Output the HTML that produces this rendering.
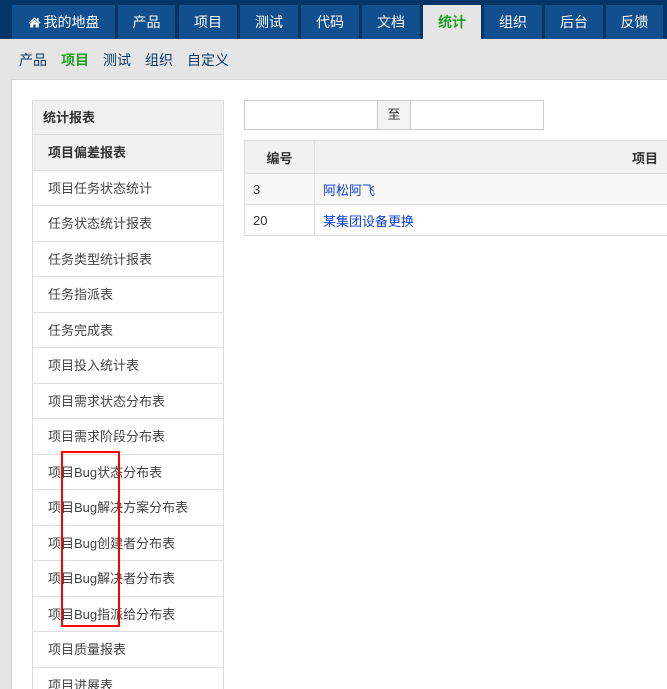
<!DOCTYPE html>
<html><head><meta charset="utf-8"><style>
*{margin:0;padding:0;box-sizing:border-box}
html{width:667px;height:689px;overflow:hidden}
body{width:667px;height:689px;overflow:hidden;background:#e5e5e5;font-family:"Liberation Sans","Noto Sans CJK SC",sans-serif;font-size:13px;color:#333;position:relative}
.top{position:absolute;left:0;top:0;width:667px;height:39px;background:#033567}
.tab{position:absolute;top:5px;height:34px;background:#114f8e;color:#fff;font-size:14px;line-height:34px;text-align:center}
.tab.on{background:#e5e5e5;color:#229f24;font-weight:bold}
.sub{position:absolute;top:50px;font-size:14px;color:#0b3a6a}
.panel{position:absolute;left:11px;top:79px;width:670px;height:620px;background:#fff;border:1px solid #d5d5d5}
.side{position:absolute;left:32px;top:100px;width:192px;height:589px;overflow:hidden;border:1px solid #ddd;border-bottom:none}
.side div{height:35.5px;line-height:35px;border-bottom:1px solid #ddd;padding-left:15px;color:#444}
.side .h{height:34px;line-height:34px;background:#f1f1f1;font-weight:bold;padding-left:10px;color:#333}
.side .a{background:#f1f1f1;font-weight:bold;color:#333}
.box{position:absolute;border:1px solid #ccc;background:#fff}
table{position:absolute;left:244px;top:140px;border-collapse:collapse;width:430px}
td,th{border:1px solid #ddd;height:31px;padding:0 8px;text-align:left;font-weight:normal}
th{height:33px;background:#f1f1f1;font-weight:bold;text-align:center}
a{color:#0d3fd7;text-decoration:none}
</style></head><body>
<div class="top"></div>
<div class="tab" style="left:12px;width:103px"><svg width="13" height="11" viewBox="0 0 13 11" style="vertical-align:-1px;margin-right:3px"><path d="M6.5 0.5L0.5 5.8 1.3 6.6 6.5 2 11.7 6.6 12.5 5.8 10.5 4V1H9V2.7Z" fill="#fff"/><path d="M2.3 6.3L6.5 2.7 10.7 6.3V10.5H7.7V7.5H5.3V10.5H2.3Z" fill="#fff"/></svg>我的地盘</div>
<div class="tab" style="left:118px;width:57px">产品</div>
<div class="tab" style="left:179px;width:58px">项目</div>
<div class="tab" style="left:240px;width:58px">测试</div>
<div class="tab" style="left:301px;width:58px">代码</div>
<div class="tab" style="left:362px;width:58px">文档</div>
<div class="tab on" style="left:423px;width:58px">统计</div>
<div class="tab" style="left:484px;width:58px">组织</div>
<div class="tab" style="left:545px;width:58px">后台</div>
<div class="tab" style="left:606px;width:57px">反馈</div>
<div class="sub" style="left:19px">产品</div>
<div class="sub" style="left:61px;color:#229f24;font-weight:bold">项目</div>
<div class="sub" style="left:103px">测试</div>
<div class="sub" style="left:145px">组织</div>
<div class="sub" style="left:187px">自定义</div>
<div class="panel"></div>
<div class="side">
<div class="h">统计报表</div>
<div class="a">项目偏差报表</div>
<div>项目任务状态统计</div>
<div>任务状态统计报表</div>
<div>任务类型统计报表</div>
<div>任务指派表</div>
<div>任务完成表</div>
<div>项目投入统计表</div>
<div>项目需求状态分布表</div>
<div>项目需求阶段分布表</div>
<div>项目Bug状态分布表</div>
<div>项目Bug解决方案分布表</div>
<div>项目Bug创建者分布表</div>
<div>项目Bug解决者分布表</div>
<div>项目Bug指派给分布表</div>
<div>项目质量报表</div>
<div>项目进展表</div>
</div>
<div class="box" style="left:244px;top:100px;width:134px;height:30px"></div>
<div class="box" style="left:377px;top:100px;width:34px;height:30px;background:#f3f3f3;text-align:center;line-height:28px">至</div>
<div class="box" style="left:410px;top:100px;width:134px;height:30px"></div>
<table>
<tr><th style="width:70px">编号</th><th style="text-align:right;padding-right:15px">项目</th></tr>
<tr style="background:#f7f7f7"><td>3</td><td><a>阿松阿飞</a></td></tr>
<tr><td>20</td><td><a>某集团设备更换</a></td></tr>
</table>
<div style="position:absolute;left:61px;top:451px;width:59px;height:176px;border:2px solid #f00"></div>
</body></html>
